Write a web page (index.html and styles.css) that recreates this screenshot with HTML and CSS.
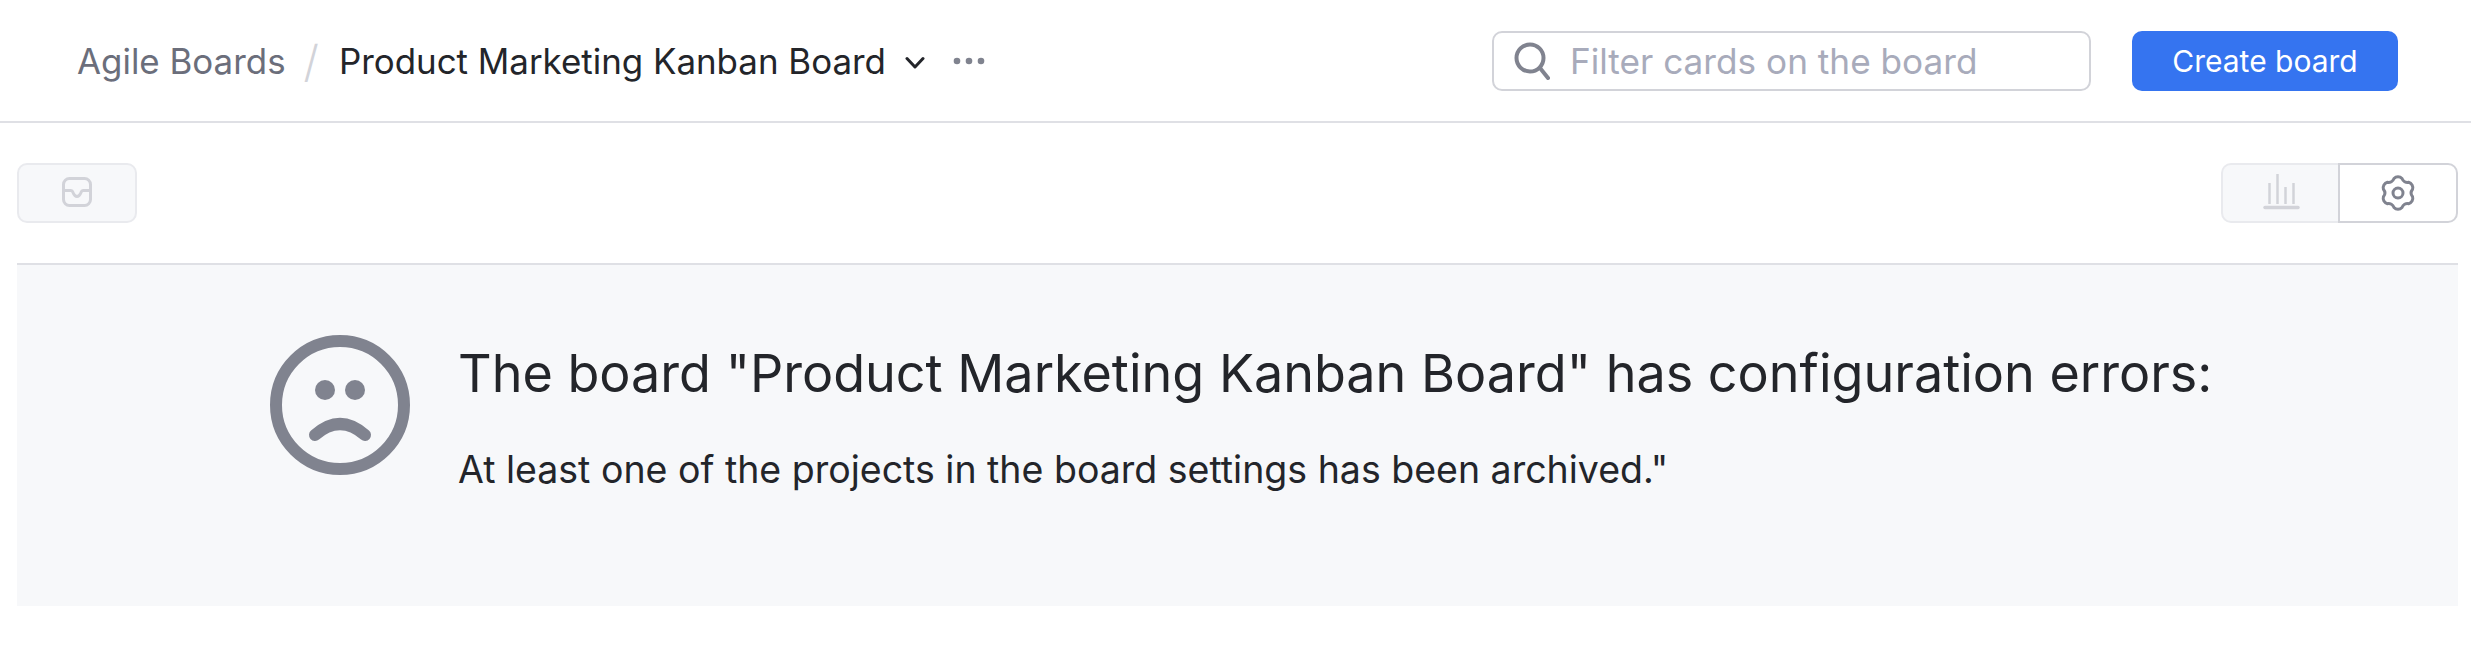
FILE: index.html
```html
<!DOCTYPE html>
<html lang="en">
<head>
<meta charset="utf-8">
<title>Product Marketing Kanban Board</title>
<link rel="stylesheet" href="styles.css">
</head>
<body>
<header class="topbar">
  <nav class="crumbs">
    <span class="crumb-root">Agile Boards</span>
    <span class="crumb-sep">/</span>
    <span class="crumb-current">Product Marketing Kanban Board</span>
    <svg class="chevron" viewBox="0 0 20 14" width="20" height="14"><path d="M2 2.500 10 11 18 2.500" fill="none" stroke="#23252a" stroke-width="3" stroke-linecap="round" stroke-linejoin="round"/></svg>
    <svg class="dots" viewBox="0 0 32 8" width="32" height="8"><circle cx="4" cy="4" r="3.300"/><circle cx="16" cy="4" r="3.300"/><circle cx="28" cy="4" r="3.300"/></svg>
  </nav>
  <div class="search">
    <svg class="search-icon" viewBox="0 0 36 38" width="36" height="38"><circle cx="16" cy="16" r="13.500" fill="none" stroke="#80838f" stroke-width="4"/><path d="M26 26 34 36" stroke="#80838f" stroke-width="4" stroke-linecap="round"/></svg>
    <span class="search-text">Filter cards on the board</span>
  </div>
  <button class="create">Create board</button>
</header>
<section class="toolbar">
  <div class="tool tool-disabled">
    <svg class="glyph" viewBox="0 1 30 30" width="30" height="30"><rect x="1.500" y="1.500" width="27" height="27" rx="6" fill="none" stroke="#d2d3d9" stroke-width="3"/><path d="M2 13.500H9C10 13.500 10.500 14 11 15.500 12 18 13.500 19.500 15 19.500S18 18 19 15.500C19.500 14 20 13.500 21 13.500H28" fill="none" stroke="#d2d3d9" stroke-width="3"/></svg>
  </div>
  <div class="tool-group">
    <div class="tool tool-disabled tool-left">
      <svg class="glyph" viewBox="0 0 36 36" width="36" height="36"><path d="M6.500 8V29M14.500 -1V29M22.500 12V29M30.500 8V29" stroke="#d2d3d9" stroke-width="2.500" fill="none"/><path d="M2 32.500H35" stroke="#d2d3d9" stroke-width="3.500" stroke-linecap="round"/></svg>
    </div>
    <div class="tool tool-right">
      <svg class="glyph" viewBox="0 0 36 36" width="36" height="36"><path d="M14 3.500A5.500 5.500 0 0 1 22 3.500A6 6 0 0 0 28.600 7.300A5.500 5.500 0 0 1 32.600 14.200A6 6 0 0 0 32.600 21.800A5.500 5.500 0 0 1 28.600 28.700A6 6 0 0 0 22 32.500A5.500 5.500 0 0 1 14 32.500A6 6 0 0 0 7.400 28.700A5.500 5.500 0 0 1 3.400 21.800A6 6 0 0 0 3.400 14.200A5.500 5.500 0 0 1 7.400 7.300A6 6 0 0 0 14 3.500Z" fill="none" stroke="#80838f" stroke-width="3" stroke-linejoin="round"/><circle cx="18" cy="18" r="5" fill="none" stroke="#80838f" stroke-width="3"/></svg>
    </div>
  </div>
</section>
<main class="panel">
  <svg class="sad" viewBox="0 0 140 140" width="140" height="140"><circle cx="70" cy="70" r="64" fill="none" stroke="#80838f" stroke-width="12"/><circle cx="55" cy="55" r="10" fill="#80838f"/><circle cx="85" cy="55" r="10" fill="#80838f"/><path d="M45 100Q70 78 95 100" fill="none" stroke="#80838f" stroke-width="12" stroke-linecap="round"/></svg>
  <div class="message">
    <h1>The board "Product Marketing Kanban Board" has configuration errors:</h1>
    <p>At least one of the projects in the board settings has been archived."</p>
  </div>
</main>
</body>
</html>
```
FILE: styles.css
```css
* { box-sizing: border-box; }
html, body { margin: 0; height: 100%; background: #fff; }
body { font-family: Inter, "Liberation Sans", sans-serif; color: #23252a; }

.topbar {
  display: flex;
  align-items: center;
  height: 123px;
  padding: 0 73px 0 77px;
  border-bottom: 2px solid #dfe0e5;
}
.crumbs { display: flex; align-items: center; flex: 1; font-size: 34.900px; }
.crumb-root { color: #6b6e7b; }
.crumb-sep { color: #d2d3d9; margin: 0 20px 0 18px; font-size: 44px; font-weight: 300; }
.crumb-current { color: #23252a; }
.chevron { margin: 4px 0 0 19px; }
.dots { margin-left: 28px; fill: #80838f; }

.search {
  display: flex;
  align-items: center;
  gap: 20px;
  width: 599px;
  height: 60px;
  padding: 0 20px;
  border: 2px solid #d2d3d9;
  border-radius: 10px;
  margin-right: 41px;
}
.search-text { font-size: 35.200px; color: #a8abbb; }
.create {
  width: 266px;
  height: 60px;
  border: 0;
  border-radius: 10px;
  background: #3574f0;
  color: #fff;
  font: 30px Inter, "Liberation Sans", sans-serif;
  padding: 0;
}

.toolbar {
  display: flex;
  justify-content: space-between;
  padding: 40px 13px 40px 17px;
}
.tool {
  display: flex;
  align-items: center;
  justify-content: center;
  width: 120px;
  height: 60px;
  border: 2px solid #e9eaee;
  border-radius: 10px;
}
.glyph { overflow: visible; }
.tool-disabled { background: #f7f8fa; }
.tool-group { display: flex; }
.tool-left { width: 117px; border-right: 0; border-radius: 10px 0 0 10px; }
.tool-right { width: 120px; border-color: #d2d3d9; border-radius: 0 10px 10px 0; }

.panel {
  display: flex;
  height: 343px;
  margin: 0 13px 0 17px;
  padding: 70px 0 0 253px;
  border-top: 2px solid #dfe0e5;
  background: #f7f8fa;
}
.sad { flex: none; }
.message { margin-left: 48px; padding-top: 4px; }
h1 { margin: 0; font-size: 52.100px; font-weight: 400; line-height: 70px; color: #23252a; }
p { margin: 36px 0 0; font-size: 37.500px; line-height: 50px; color: #23252a; }
```
